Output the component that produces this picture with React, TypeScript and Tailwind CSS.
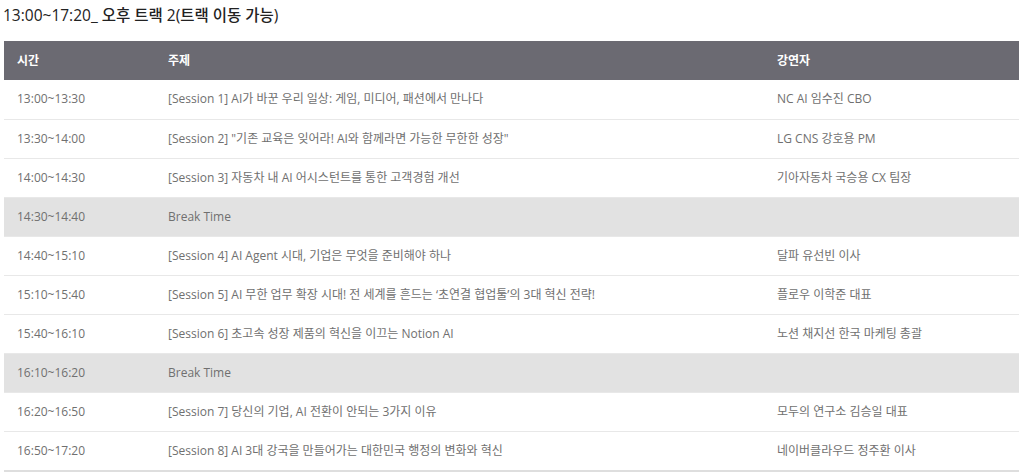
const rows: { time: string; topic: string; speaker: string; isBreak?: boolean }[] = [
    { time: '13:00~13:30', topic: '[Session 1] AI가 바꾼 우리 일상: 게임, 미디어, 패션에서 만나다', speaker: 'NC AI 임수진 CBO' },
    { time: '13:30~14:00', topic: '[Session 2] "기존 교육은 잊어라! AI와 함께라면 가능한 무한한 성장"', speaker: 'LG CNS 강호용 PM' },
    { time: '14:00~14:30', topic: '[Session 3] 자동차 내 AI 어시스턴트를 통한 고객경험 개선', speaker: '기아자동차 국승용 CX 팀장' },
    { time: '14:30~14:40', topic: 'Break Time', speaker: '', isBreak: true },
    { time: '14:40~15:10', topic: '[Session 4] AI Agent 시대, 기업은 무엇을 준비해야 하나', speaker: '달파 유선빈 이사' },
    { time: '15:10~15:40', topic: '[Session 5] AI 무한 업무 확장 시대! 전 세계를 흔드는 ‘초연결 협업툴’의 3대 혁신 전략!', speaker: '플로우 이학준 대표' },
    { time: '15:40~16:10', topic: '[Session 6] 초고속 성장 제품의 혁신을 이끄는 Notion AI', speaker: '노션 채지선 한국 마케팅 총괄' },
    { time: '16:10~16:20', topic: 'Break Time', speaker: '', isBreak: true },
    { time: '16:20~16:50', topic: '[Session 7] 당신의 기업, AI 전환이 안되는 3가지 이유', speaker: '모두의 연구소 김승일 대표' },
    { time: '16:50~17:20', topic: '[Session 8] AI 3대 강국을 만들어가는 대한민국 행정의 변화와 혁신', speaker: '네이버클라우드 정주환 이사' },
];

export default function App() {
    return (
        <div className="w-[1024px] h-[472px] bg-white overflow-hidden font-['Open_Sans','Noto_Sans_CJK_KR',sans-serif]">
            <h2 className="pl-[3px] pt-[4px] h-[41px] text-[15.5px] leading-[22px] font-medium text-[#222]">
                13:00~17:20_ 오후 트랙 2(트랙 이동 가능)
            </h2>
            <div className="ml-[4px] w-[1015px] border-b-2 border-[#dedede]">
                <table className="w-full table-fixed border-collapse text-[12px] text-[#707070]">
                    <colgroup>
                        <col className="w-[151px]" />
                        <col className="w-[609px]" />
                        <col />
                    </colgroup>
                    <thead>
                        <tr className="h-[39px] bg-[#6b6a72] text-white text-left">
                            <th className="pl-[13px] font-bold">시간</th>
                            <th className="pl-[13px] font-bold">주제</th>
                            <th className="pl-[13px] font-bold">강연자</th>
                        </tr>
                    </thead>
                    <tbody>
                        {rows.map((row, i) => (
                            <tr
                                key={row.time}
                                className={`h-[39px] ${row.isBreak ? 'bg-[#e2e2e2]' : 'bg-white'} ${i < rows.length - 1 ? 'border-b border-[#e8e8e8]' : ''}`}
                            >
                                <td className="pl-[13px] whitespace-nowrap">{row.time}</td>
                                <td className="pl-[13px] whitespace-nowrap">{row.topic}</td>
                                <td className="pl-[13px] whitespace-nowrap">{row.speaker}</td>
                            </tr>
                        ))}
                    </tbody>
                </table>
            </div>
        </div>
    );
}
